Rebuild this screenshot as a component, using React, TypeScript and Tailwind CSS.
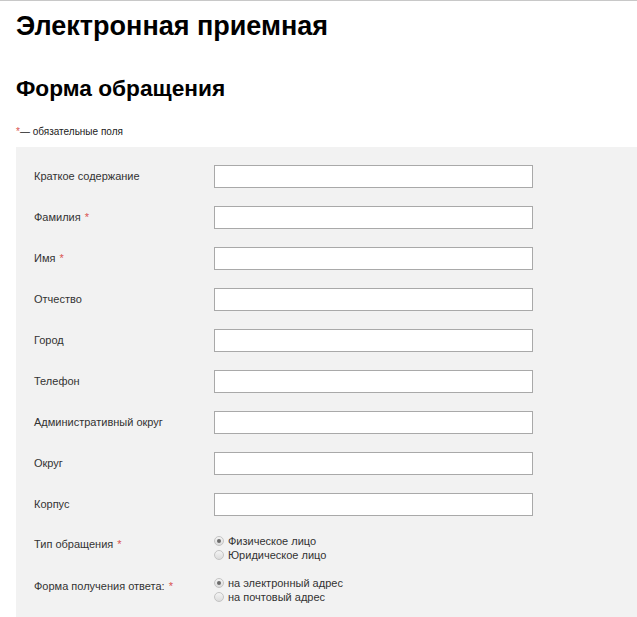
const FIELDS: { label: string; required?: boolean }[] = [
  { label: "Краткое содержание" },
  { label: "Фамилия", required: true },
  { label: "Имя", required: true },
  { label: "Отчество" },
  { label: "Город" },
  { label: "Телефон" },
  { label: "Административный округ" },
  { label: "Округ" },
  { label: "Корпус" },
];

const CHOICES = [
  { label: "Тип обращения", options: ["Физическое лицо", "Юридическое лицо"] },
  { label: "Форма получения ответа:", options: ["на электронный адрес", "на почтовый адрес"] },
];

function Star() {
  return <span className="ml-[4px] text-[#d9534f]">*</span>;
}

function Radio({ checked }: { checked: boolean }) {
  return (
    <span className="flex h-[10px] w-[10px] items-center justify-center rounded-full border border-[#c4c4c4] bg-[linear-gradient(#f4f4f4,#dcdcdc)]">
      {checked && <span className="h-[4px] w-[4px] rounded-full bg-[#6b6b6b]" />}
    </span>
  );
}

export default function App() {
  return (
    <div className="h-[617px] w-[637px] overflow-hidden border-t border-[#c8c8c8] bg-white font-['Liberation_Sans',Arial,sans-serif] text-[#222]">
      <h1 className="ml-4 mt-[9px] text-[27px] font-bold leading-[32px] text-black">
        Электронная приемная
      </h1>
      <h2 className="ml-4 mt-[32px] text-[22.7px] font-bold leading-[28px] text-black">
        Форма обращения
      </h2>
      <p className="ml-4 mt-[24px] text-[10px] leading-[12px] text-[#222]">
        <span className="text-[#d9534f]">*</span>— обязательные поля
      </p>

      <div className="ml-4 mt-[9px] h-[520px] bg-[#f2f2f2] pl-[18px] pt-[18px]">
        {FIELDS.map((f) => (
          <div key={f.label} className="mb-[18px] flex h-[23px] items-center">
            <div className="w-[180px] text-[11px] text-[#333]">
              {f.label}
              {f.required && <Star />}
            </div>
            <input
              type="text"
              className="h-[23px] w-[319px] border border-[#a9a9a9] bg-white outline-none"
            />
          </div>
        ))}

        {CHOICES.map((c) => (
          <div key={c.label} className="mb-[14px] flex">
            <div className="w-[180px] pt-[3px] text-[11px] leading-[14px] text-[#333]">
              {c.label}
              <Star />
            </div>
            <div className="flex flex-col">
              {c.options.map((o, i) => (
                <label
                  key={o}
                  className="flex h-[14px] items-center gap-[4px] text-[11px] text-[#333]"
                >
                  <Radio checked={i === 0} />
                  {o}
                </label>
              ))}
            </div>
          </div>
        ))}
      </div>
    </div>
  );
}
